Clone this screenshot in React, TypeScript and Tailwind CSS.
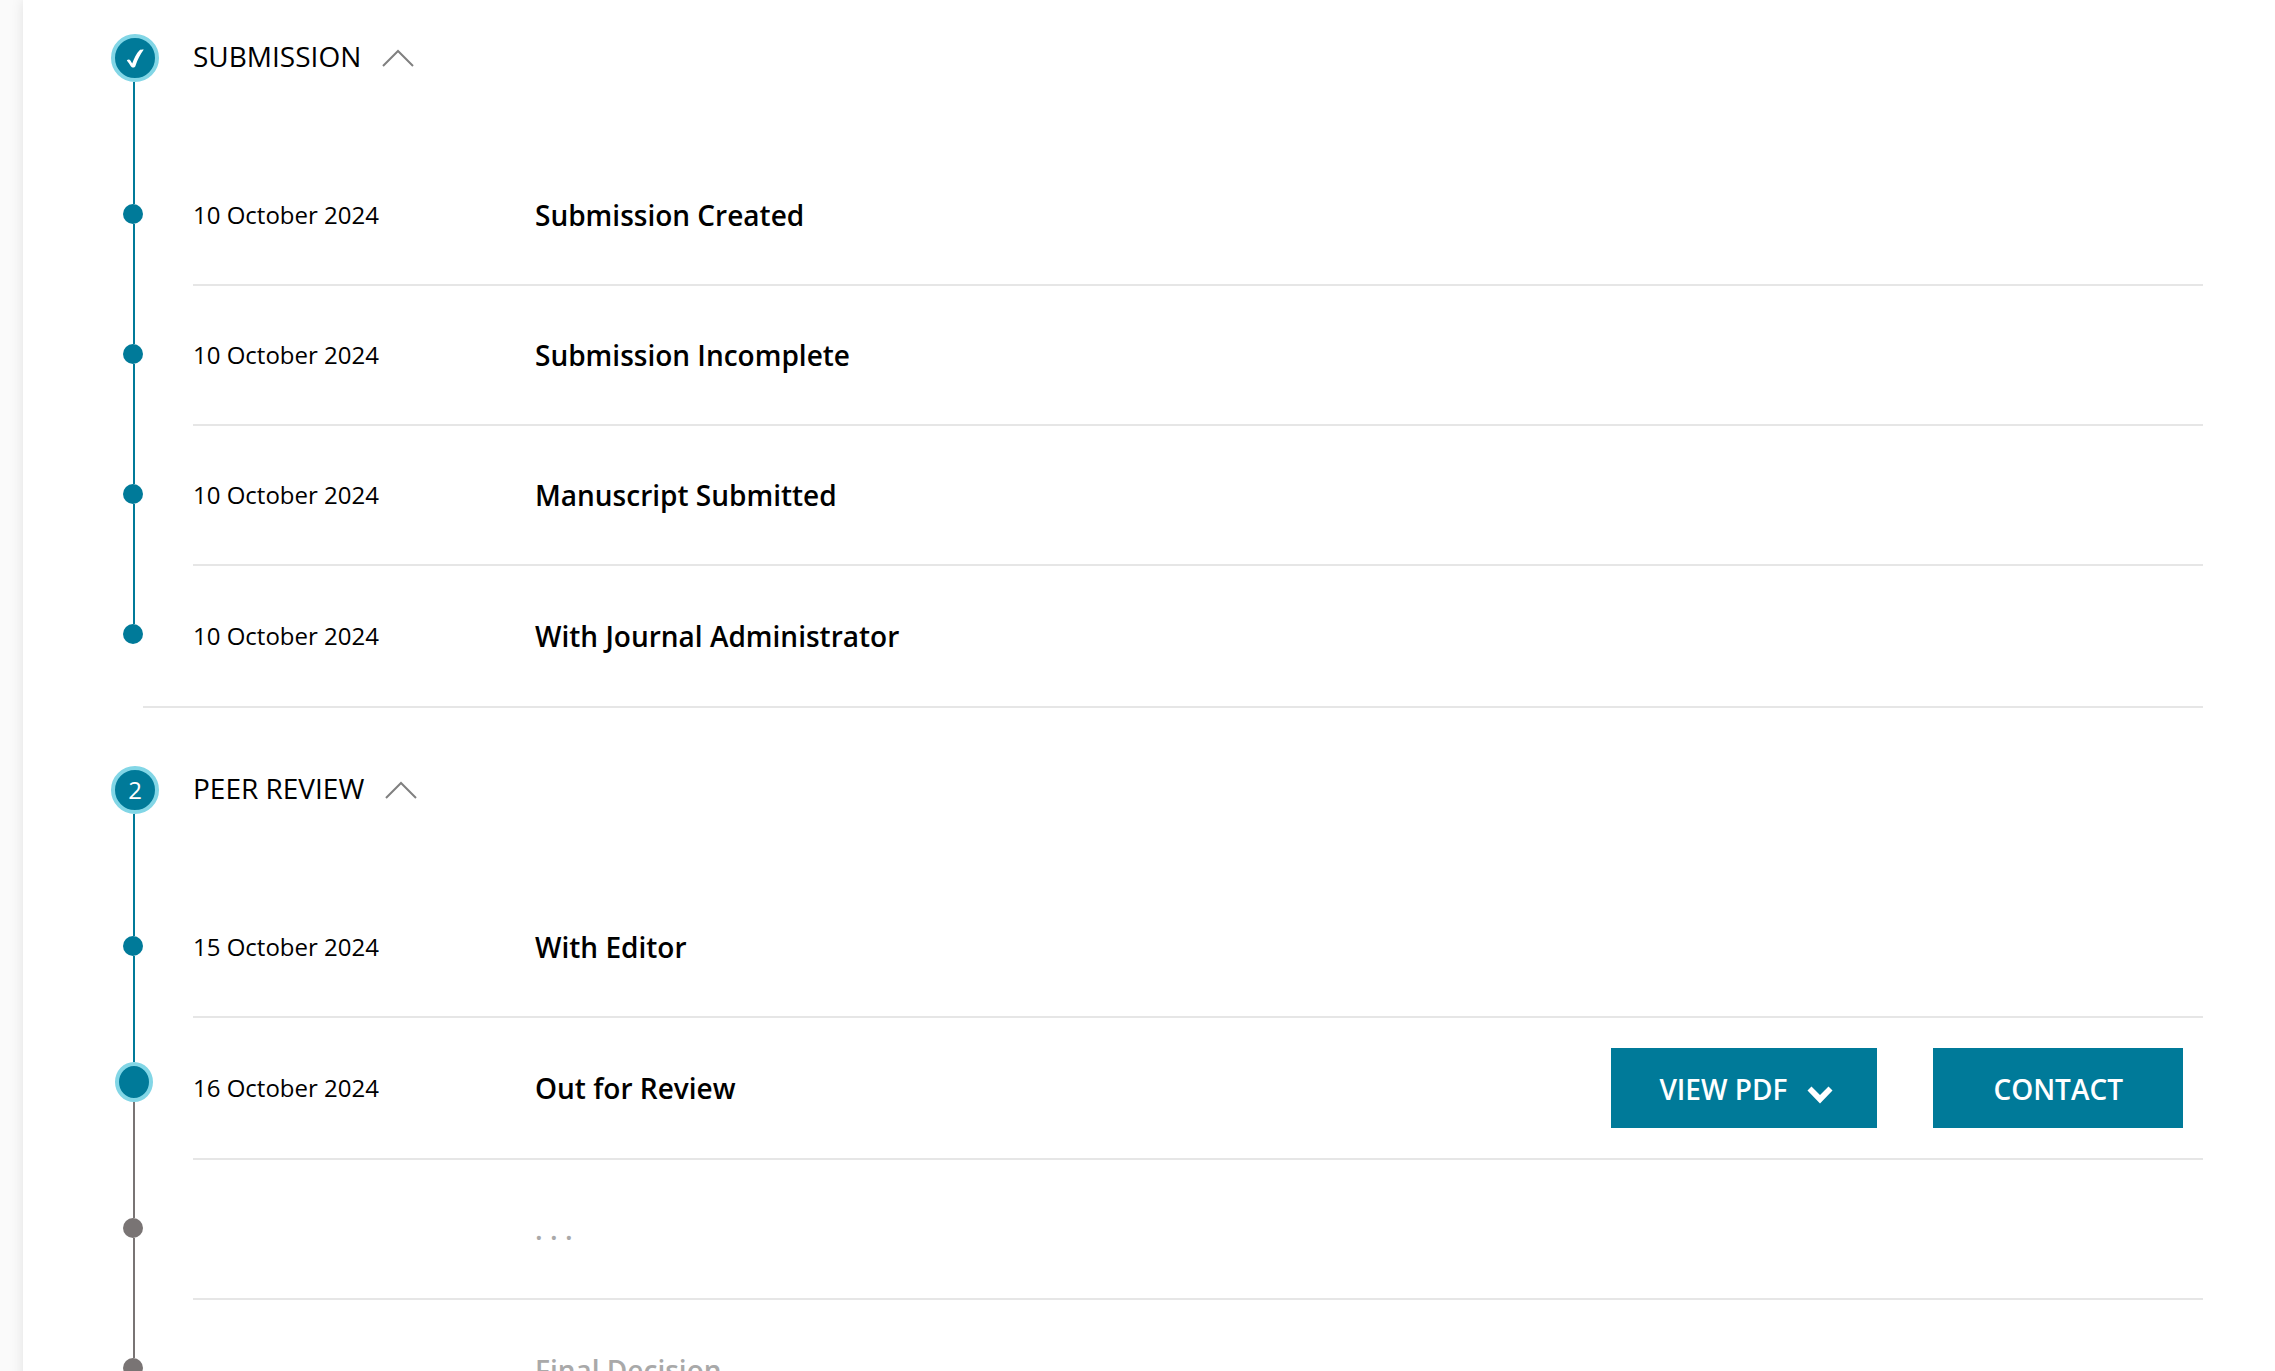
import { useState } from "react";
import clsx from "clsx";

type Step = {
  date?: string;
  title: string;
  status: "done" | "current" | "pending";
  actions?: boolean;
};

type Stage = {
  name: string;
  badge: string;
  steps: Step[];
};

const stages: Stage[] = [
  {
    name: "SUBMISSION",
    badge: "check",
    steps: [
      { date: "10 October 2024", title: "Submission Created", status: "done" },
      { date: "10 October 2024", title: "Submission Incomplete", status: "done" },
      { date: "10 October 2024", title: "Manuscript Submitted", status: "done" },
      { date: "10 October 2024", title: "With Journal Administrator", status: "done" },
    ],
  },
  {
    name: "PEER REVIEW",
    badge: "2",
    steps: [
      { date: "15 October 2024", title: "With Editor", status: "done" },
      { date: "16 October 2024", title: "Out for Review", status: "current", actions: true },
      { title: ". . .", status: "pending" },
      { title: "Final Decision", status: "pending" },
    ],
  },
];

const CheckIcon = () => (
  <svg width="18" height="20" viewBox="0 0 18 20" fill="#fff" aria-label="Complete">
    <path d="M0.8 12.6C1.8 11.2 3.6 11.2 4.4 12.6L6.2 15.4C8 10.4 10.6 5.2 13.6 2.2C14.6 1.3 16.4 1.4 17.8 1.4C14.2 6.2 11.4 11.8 9.6 17.4C9.2 18.8 8.4 19.4 7.2 19.4C6.2 19.4 5.4 19.2 4.8 18.2C3.6 16.2 2.4 14.2 0.8 12.6Z" />
  </svg>
);

const Chevron = ({ open }: { open: boolean }) => (
  <svg
    width="32"
    height="18"
    viewBox="0 0 32 18"
    fill="none"
    stroke="#808080"
    strokeWidth="2"
    className={clsx(!open && "rotate-180")}
  >
    <path d="M1 17L16 2L31 17" />
  </svg>
);

const Actions = () => (
  <div className="mr-5 ml-auto flex shrink-0 gap-14 text-[28px] leading-10 font-semibold text-white">
    <button className="flex h-20 items-center gap-5 bg-[#007a99] pt-0.5 pr-11 pl-12 hover:bg-[#00657f]">
      VIEW PDF
      <svg width="26" height="18" viewBox="0 0 26 18" fill="#fff" className="mt-3">
        <path d="M0.5 4.5L4.5 0.5L13 9L21.5 0.5L25.5 4.5L13 17.5Z" />
      </svg>
    </button>
    <button className="h-20 bg-[#007a99] px-15 pt-0.5 hover:bg-[#00657f]">CONTACT</button>
  </div>
);

const StepRow = ({ step, last }: { step: Step; last: boolean }) => {
  const { status } = step;
  return (
    <li className="flex">
      <div className="flex w-[82px] shrink-0 flex-col">
        <span
          className={clsx(
            "ml-[22px] w-0.5",
            status === "current" ? "h-11" : "h-[58px]",
            status === "pending" ? "bg-[#797474]" : "bg-[#007a99]"
          )}
        />
        {status === "current" ? (
          <span className="ml-1 h-10 w-[38px] rounded-[50%] border-4 border-[#82d6e6] bg-[#007a99]" />
        ) : (
          <span
            className={clsx(
              "ml-3 size-5 rounded-full",
              status === "pending" ? "bg-[#797474]" : "bg-[#007a99]"
            )}
          />
        )}
        {!last && (
          <span
            className={clsx(
              "ml-[22px] w-0.5 flex-1",
              status === "done" ? "bg-[#007a99]" : "bg-[#797474]"
            )}
          />
        )}
      </div>
      <div
        className={clsx(
          "flex min-h-[140px] flex-1 items-center",
          step.actions && "py-[30px]",
          !last && "border-b-2 border-[#e6e6e6]"
        )}
      >
        <span className="w-[342px] shrink-0 text-2xl leading-10">{step.date}</span>
        <h3
          className={clsx(
            "text-[28px] leading-10 font-semibold",
            status === "pending" && "text-[#a9a9a9]"
          )}
        >
          {step.title}
        </h3>
        {step.actions && <Actions />}
      </div>
    </li>
  );
};

const StageSection = ({ stage }: { stage: Stage }) => {
  const [open, setOpen] = useState(true);
  return (
    <section className="group">
      <div className="flex pt-[58px] group-first:pt-[34px]">
        <div className="flex w-[82px] shrink-0 flex-col">
          <span className="flex size-12 items-center justify-center rounded-full border-4 border-[#82d6e6] bg-[#007a99] text-2xl text-white">
            {stage.badge === "check" ? <CheckIcon /> : stage.badge}
          </span>
          <span className="ml-[22px] h-16 w-0.5 bg-[#007a99]" />
        </div>
        <button
          onClick={() => setOpen(!open)}
          aria-expanded={open}
          className="flex h-12 items-center gap-[21px]"
        >
          <h2 className="pb-1 text-[28px] leading-10">{stage.name}</h2>
          <Chevron open={open} />
        </button>
      </div>
      {open && (
        <ul>
          {stage.steps.map((step, i) => (
            <StepRow key={step.title} step={step} last={i === stage.steps.length - 1} />
          ))}
        </ul>
      )}
      <div className="ml-8 border-b-2 border-[#e6e6e6]" />
    </section>
  );
};

const App = () => {
  return (
    <div className="h-screen overflow-x-hidden overflow-y-auto bg-[#fafafa] pl-[23px] font-['Open_Sans',sans-serif] text-black [scrollbar-width:none]">
      <main className="min-h-screen bg-white pr-18 pl-22 shadow-[0_0_12px_rgba(0,0,0,0.1)]">
        {stages.map((stage) => (
          <StageSection key={stage.name} stage={stage} />
        ))}
      </main>
    </div>
  );
};

export default App;
